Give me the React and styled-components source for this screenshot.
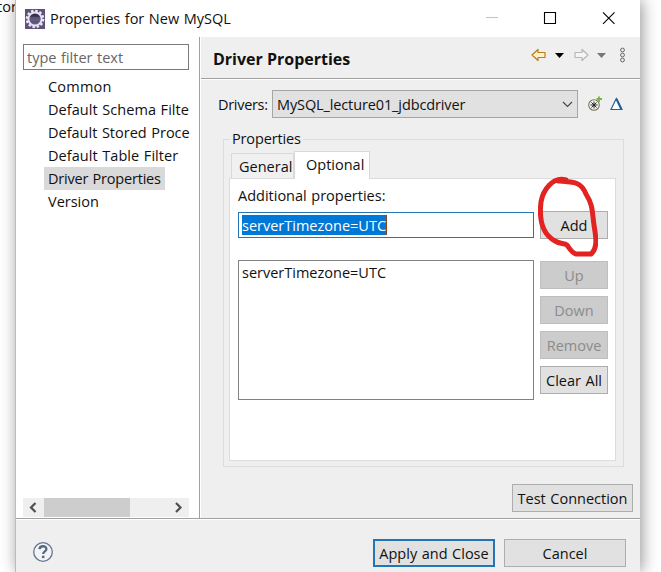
import styled, { createGlobalStyle } from "styled-components";

const treeItems = [
  { name: "Common", spacing: 0.2 },
  { name: "Default Schema Filte", spacing: 0.05 },
  { name: "Default Stored Proce" },
  { name: "Default Table Filter", spacing: 0.05 },
  { name: "Driver Properties", selected: true, spacing: -0.2 },
  { name: "Version" },
]

const App = () => {
  return (
    <Desktop>
      <GlobalStyle />
      <Behind>tor</Behind>
      <Window>
        <TitleBar>
          <EclipseIcon />
          <Title>Properties for New MySQL</Title>
          <WindowIcons />
        </TitleBar>
        <Body>
          <Sidebar>
            <FilterInput placeholder="type filter text" />
            <Tree>
              {treeItems.map((item) => (
                <TreeItem key={item.name} $selected={item.selected}>
                  <Label $spacing={item.spacing}>{item.name}</Label>
                </TreeItem>
              ))}
            </Tree>
            <ScrollBar>
              <ScrollArrow left />
              <Thumb />
              <ScrollArrow />
            </ScrollBar>
          </Sidebar>
          <Page>
            <PageHeader>
              <h1>Driver Properties</h1>
              <NavIcons />
            </PageHeader>
            <DriverRow>
              <Label $spacing={-0.3}>Drivers:</Label>
              <Combo>
                <Label $spacing={-0.12}>MySQL_lecture01_jdbcdriver</Label>
                <svg width="11" height="7" viewBox="0 0 11 7" fill="none" stroke="#444" strokeWidth="1.1">
                  <path d="M1 1l4.5 4.5L10 1" />
                </svg>
              </Combo>
              <DriverIcons />
            </DriverRow>
            <Group>
              <legend>Properties</legend>
              <Tabs>
                <Tab>General</Tab>
                <Tab $active>Optional</Tab>
              </Tabs>
              <TabPanel>
                <PanelLabel>Additional properties:</PanelLabel>
                <AddRow>
                  <PropertyField><mark>serverTimezone=UTC</mark></PropertyField>
                  <Button>Add</Button>
                </AddRow>
                <ListRow>
                  <PropertyList>serverTimezone=UTC</PropertyList>
                  <ButtonColumn>
                    <Button disabled>Up</Button>
                    <Button disabled>Down</Button>
                    <Button disabled>Remove</Button>
                    <Button>Clear All</Button>
                  </ButtonColumn>
                </ListRow>
              </TabPanel>
            </Group>
            <TestRow>
              <Button $width={121}>Test Connection</Button>
            </TestRow>
          </Page>
        </Body>
        <Footer>
          <HelpIcon />
          <Button $width={122} $primary>Apply and Close</Button>
          <Button $width={122}>Cancel</Button>
        </Footer>
      </Window>
      <RedMark viewBox="0 0 60 84">
        <path d="M28 4C15 0 5 14 3 26C1 43 4 58 17 65C22 68 26 67 29 69C32 73 34 77 38 78H53C61 71 57 57 56 49C54 35 55 29 48 18C43 6 37 6 20 5" />
      </RedMark>
    </Desktop>
  )
}

const EclipseIcon = () => (
  <svg width="20" height="20" viewBox="0 0 20 20">
    <defs>
      <linearGradient id="eclipse" x1="0" y1="0" x2="0" y2="1">
        <stop offset="0" stopColor="#292338" />
        <stop offset="1" stopColor="#706795" />
      </linearGradient>
    </defs>
    <rect width="20" height="20" fill="#5d527c" />
    <circle cx="10" cy="10" r="8.2" fill="none" stroke="#eeeaf4" strokeWidth="2.2" strokeDasharray="2.5 1.794" />
    <circle cx="10" cy="10" r="6.6" fill="url(#eclipse)" stroke="#e8e4ef" strokeWidth="2" />
    <path d="M5 9h10M5 11h10" stroke="#8980a7" strokeWidth=".7" />
  </svg>
)

const WindowIcons = () => (
  <svg width="136" height="14" viewBox="0 0 136 14" fill="none" stroke="#000" strokeWidth="1.1">
    <path d="M1 6.5h12" stroke="#c5c5c5" />
    <path d="M59.5 1.5h11v11h-11z" />
    <path d="M118 1.3l11.5 11.5M129.5 1.3L118 12.8" />
  </svg>
)

const NavIcons = () => (
  <svg width="96" height="16" viewBox="0 0 96 16" fill="none">
    <path d="M1 8l6-5.5v3h7v5H7v3z" fill="#fff3c9" stroke="#bd7c17" strokeWidth="1.2" strokeLinejoin="round" />
    <path d="M24 6h9l-4.5 5z" fill="#000" />
    <path d="M57 8l-6-5.5v3h-7v5h7v3z" fill="#f5f5f5" stroke="#b7b7b7" strokeWidth="1.2" strokeLinejoin="round" />
    <path d="M66 6h9l-4.5 5z" fill="#777" />
    <g stroke="#666" strokeWidth="1">
      <circle cx="91.5" cy="3" r="1.9" />
      <circle cx="91.5" cy="8" r="1.9" />
      <circle cx="91.5" cy="13" r="1.9" />
    </g>
  </svg>
)

const DriverIcons = () => (
  <svg width="38" height="18" viewBox="0 0 38 18" fill="none">
    <circle cx="7" cy="10" r="5.3" fill="#f7f7ee" stroke="#777569" strokeWidth="1.1" />
    <path d="M7 6.5v7M3.5 10h7M4.5 7.5l5 5M9.5 7.5l-5 5" stroke="#252525" strokeWidth="1" />
    <path d="M12 1.5v5.5M9.500 4h5.500" stroke="#77b544" strokeWidth="1.9" />
    <path d="M24 14.500L29.300 3.500L35 14.500z" fill="#fff" stroke="#255f98" strokeWidth="1.200" />
    <path d="M29.500 4l4.700 10" stroke="#255f98" strokeWidth="2" />
  </svg>
)

const HelpIcon = () => (
  <svg width="20" height="20" viewBox="0 0 20 20" fill="none">
    <circle cx="10" cy="10" r="9.3" fill="#f2f4f7" stroke="#66758b" strokeWidth="1.3" />
    <path d="M6.5 7.2C6.8 3.3 13.4 3.3 13.4 7C13.4 9.5 10.2 9.3 10.2 12" stroke="#56677f" strokeWidth="2.3" />
    <path d="M10.2 13.7v2.4" stroke="#56677f" strokeWidth="2.5" />
  </svg>
)

const ScrollArrow = ({left}) => (
  <svg width="21" height="19" viewBox="0 0 21 19" fill="none" stroke="#505050" strokeWidth="2.2">
    <path d={left ? "M12.5 5L8 9.5l4.5 4.5" : "M8 5l4.5 4.5L8 14"} />
  </svg>
)

const GlobalStyle = createGlobalStyle`
  * {
    box-sizing: border-box;
  }

  body {
    margin: 0;
    overflow: hidden;
    background: #fff;
    color: #111;
    font-family: "Open Sans", "Noto Sans", sans-serif;
    font-size: 14.5px;
    word-spacing: 0.8px;
  }

  svg {
    display: block;
    flex-shrink: 0;
  }
`

const Desktop = styled.div`
  position: relative;
  display: flex;
  height: 572px;
  overflow: hidden;
`

const Behind = styled.div`
  width: 15px;
  flex-shrink: 0;
  line-height: 13px;
  text-indent: -3px;
  white-space: nowrap;
`

const Window = styled.div`
  display: flex;
  flex-direction: column;
  width: 625px;
  height: 572px;
  border-left: 1px solid #bbb;
  background: #efefef;
  box-shadow: 2px 0 15px rgba(0, 0, 0, 0.42);
`

const TitleBar = styled.div`
  display: flex;
  align-items: center;
  height: 37px;
  padding: 0 19px 0 9px;
  background: #fff;

  & > svg:last-child {
    margin: -2px 0 0 auto;
  }
`

const Title = styled.span`
  margin-left: 5px;
  white-space: nowrap;
`

const Label = styled.span`
  letter-spacing: ${({ $spacing }) => $spacing || 0}px;
  white-space: nowrap;
`

const Body = styled.div`
  display: flex;
  height: 482px;
  border-bottom: 1px solid #a0a0a0;
  box-shadow: 0 1px #fff;
`

const Sidebar = styled.div`
  display: flex;
  flex-direction: column;
  width: 184px;
  padding: 7px 10px 0 7px;
  border-right: 1px solid #a0a0a0;
  background: #fff;
`

const FilterInput = styled.input`
  width: 166px;
  height: 26px;
  padding: 0 3px;
  border: 1px solid #7a7a7a;
  border-radius: 0;
  font: inherit;
  word-spacing: inherit;

  &::placeholder {
    color: #666;
  }
`

const Tree = styled.div`
  height: 423px;
  margin-top: 5px;
  padding-left: 21px;
`

const TreeItem = styled.div`
  width: max-content;
  height: 23px;
  padding: 0 4px;
  line-height: 24px;
  background: ${({ $selected }) => ($selected ? "#d9d9d9" : "transparent")};
`

const ScrollBar = styled.div`
  display: flex;
  justify-content: space-between;
  height: 19px;
  background: #efefef;
`

const Thumb = styled.div`
  width: 86px;
  margin-right: auto;
  background: #cdcdcd;
`

const Page = styled.div`
  flex: 1;
  border-left: 1px solid #fff;
`

const PageHeader = styled.div`
  display: flex;
  align-items: center;
  justify-content: space-between;
  height: 42px;
  padding: 0 13px 5px 12px;
  border-bottom: 1px solid #a0a0a0;
  box-shadow: 0 1px #fff;

  & h1 {
    margin: 8px 0 0;
    font-size: 16px;
    font-weight: 700;
    word-spacing: 0;
  }
`

const DriverRow = styled.div`
  display: flex;
  align-items: center;
  height: 28px;
  margin: 11px 0 0 17px;
`

const Combo = styled.div`
  display: flex;
  align-items: center;
  justify-content: space-between;
  width: 306px;
  height: 28px;
  margin: 0 9px 0 auto;
  padding: 0 4px;
  border: 1px solid #a5a5a5;
  background: #e1e1e1;

  & + svg {
    margin-right: 15px;
  }
`

const Group = styled.fieldset`
  width: 401px;
  height: 338px;
  margin: 11px 0 0 22px;
  padding: 2px 7px 5px 5px;
  border: 1px solid #dcdcdc;

  & legend {
    height: 20px;
    margin-left: 1px;
    padding: 0 2px;
    letter-spacing: -0.15px;
    line-height: 20px;
  }
`

const Tabs = styled.div`
  display: flex;
  align-items: flex-end;
  height: 27px;
  padding-left: 2px;
`

const Tab = styled.div`
  position: relative;
  width: ${({ $active }) => ($active ? "76px" : "63px")};
  height: ${({ $active }) => ($active ? "28px" : "25px")};
  margin-bottom: ${({ $active }) => ($active ? "-1px" : "0")};
  padding-left: ${({ $active }) => ($active ? "11px" : "7px")};
  border: 1px solid #d9d9d9;
  border-bottom: 0;
  background: ${({ $active }) => ($active ? "#fff" : "#f0f0f0")};
  line-height: 25px;
`

const TabPanel = styled.div`
  height: 283px;
  padding: 7px 7px 0 8px;
  border: 1px solid #dcdcdc;
  background: #fff;
`

const PanelLabel = styled.div`
  height: 25px;
  line-height: 19px;
`

const AddRow = styled.div`
  display: flex;
  align-items: center;
  justify-content: space-between;
  height: 28px;
`

const PropertyField = styled.div`
  width: 296px;
  height: 26px;
  padding: 2px 3px;
  border: 1px solid #2377b8;

  & mark {
    display: inline-block;
    height: 20px;
    border-right: 1px solid #8a4a1e;
    background: #0078d7;
    color: #fff;
    line-height: 22px;
  }
`

const ListRow = styled.div`
  display: flex;
  justify-content: space-between;
  margin-top: 21px;
`

const PropertyList = styled.div`
  width: 296px;
  height: 140px;
  padding: 2px 3px;
  border: 1px solid #828282;
  line-height: 19px;
`

const ButtonColumn = styled.div`
  display: flex;
  flex-direction: column;
  gap: 7px;
  padding-top: 1px;
`

const Button = styled.button`
  width: ${({ $width }) => $width || 68}px;
  height: 28px;
  padding: 1px 0 0;
  border: ${({ $primary }) => ($primary ? "2px solid #2475b5" : "1px solid #adadad")};
  border-radius: 0;
  background: #e1e1e1;
  color: #111;
  font: inherit;
  word-spacing: inherit;
  white-space: nowrap;

  &:disabled {
    border-color: #bfbfbf;
    background: #ccc;
    color: #8b8b8b;
  }
`

const TestRow = styled.div`
  display: flex;
  justify-content: flex-end;
  margin: 17px 7px 0 0;
`

const Footer = styled.div`
  display: flex;
  align-items: center;
  gap: 9px;
  height: 53px;
  padding: 14px 14px 0 17px;

  & > svg {
    margin: -1px auto 0 0;
  }
`

// hand drawn circle over the Add button
const RedMark = styled.svg`
  position: absolute;
  top: 176px;
  left: 538px;
  width: 60px;
  height: 84px;
  fill: none;
  stroke: #e32222;
  stroke-width: 5;
  stroke-linecap: round;
  stroke-linejoin: round;
`

export default App
